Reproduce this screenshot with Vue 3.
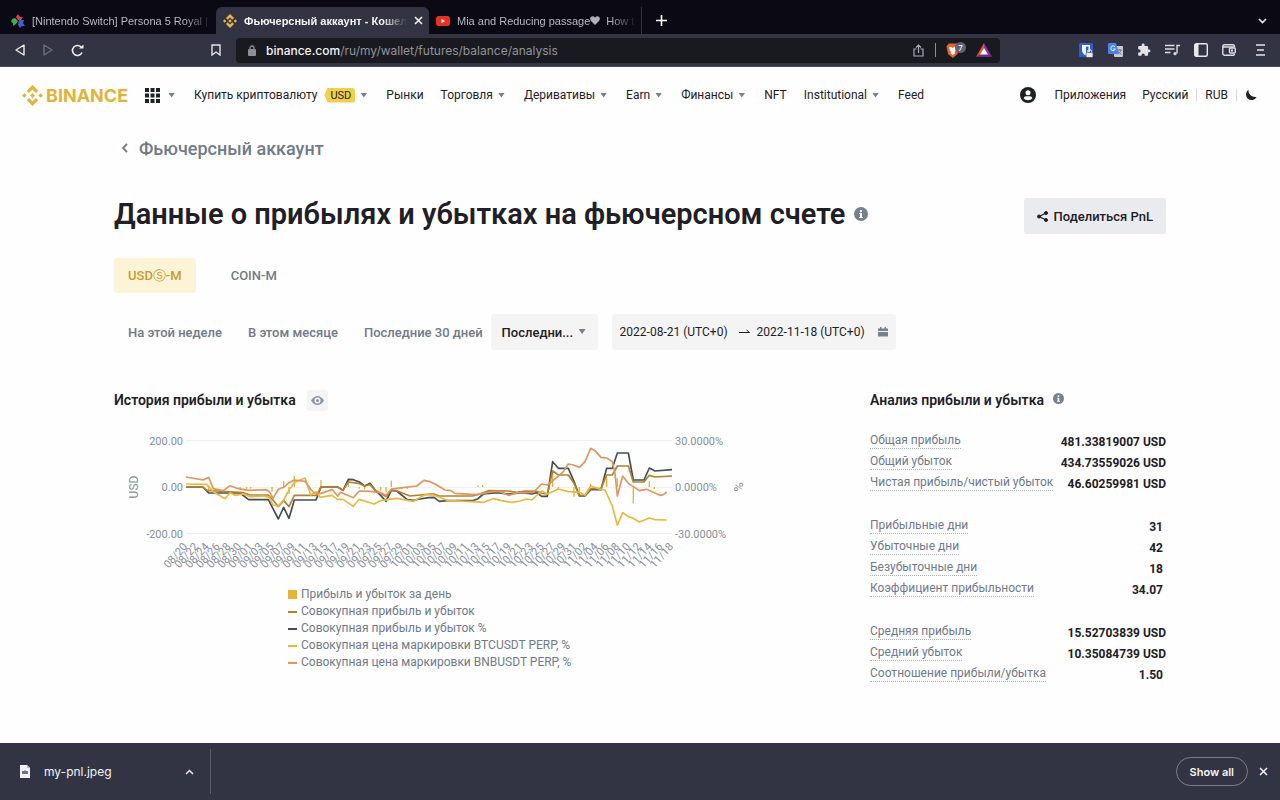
<script setup>
const navItems = [
  { label: 'Рынки' },
  { label: 'Торговля', menu: true },
  { label: 'Деривативы', menu: true },
  { label: 'Earn', menu: true },
  { label: 'Финансы', menu: true },
  { label: 'NFT' },
  { label: 'Institutional', menu: true },
  { label: 'Feed' },
]

const periods = ['На этой неделе', 'В этом месяце', 'Последние 30 дней']

const statGroups = [
  [
    { label: 'Общая прибыль', value: '481.33819007 USD' },
    { label: 'Общий убыток', value: '434.73559026 USD' },
    { label: 'Чистая прибыль/чистый убыток', value: '46.60259981 USD' },
  ],
  [
    { label: 'Прибыльные дни', value: '31', plain: true },
    { label: 'Убыточные дни', value: '42', plain: true },
    { label: 'Безубыточные дни', value: '18', plain: true },
    { label: 'Коэффициент прибыльности', value: '34.07', plain: true },
  ],
  [
    { label: 'Средняя прибыль', value: '15.52703839 USD' },
    { label: 'Средний убыток', value: '10.35084739 USD' },
    { label: 'Соотношение прибыли/убытка', value: '1.50', plain: true },
  ],
]

const legend = [
  { label: 'Прибыль и убыток за день', kind: 'bar' },
  { label: 'Совокупная прибыль и убыток', kind: 'total' },
  { label: 'Совокупная прибыль и убыток %', kind: 'percent' },
  { label: 'Совокупная цена маркировки BTCUSDT PERP, %', kind: 'btc' },
  { label: 'Совокупная цена маркировки BNBUSDT PERP, %', kind: 'bnb' },
]

// One label for every second day of the 90-day range.
const ticks = Array.from({ length: 46 }, (_, i) => {
  const d = new Date(Date.UTC(2022, 7, 20 + i * 2))
  const mm = String(d.getUTCMonth() + 1).padStart(2, '0')
  const dd = String(d.getUTCDate()).padStart(2, '0')
  return { x: 74 + i * 10.8, text: `${mm}/${dd}` }
})

// Series share a fine grid of three units per chart pixel.
const series = [
  { kind: 'percent', points: '258,321 308,321 326,339 420,339 446,359 505,359 535,417 551,382 567,415 583,360 648,360 663,321 713,321 729,331 745,298 760,299 778,306 794,318 810,310 826,331 842,346 858,364 874,331 890,333 922,359 940,361 960,357 985,353 1002,352 1018,364 1040,362 1118,362 1134,356 1150,342 1190,338 1225,342 1270,338 1295,342 1310,338 1325,349 1342,349 1358,245 1375,265 1405,265 1422,304 1438,348 1455,348 1472,329 1503,329 1520,265 1537,265 1552,219 1585,219 1600,300 1632,300 1648,264 1665,273 1716,269' },
  { kind: 'total', points: '258,321 308,321 322,331 350,333 430,338 450,345 505,345 519,360 535,380 551,362 567,380 583,346 650,346 663,321 713,321 729,331 745,306 775,310 794,318 810,314 826,331 842,340 858,350 874,330 890,332 930,348 990,342 1002,342 1018,348 1118,348 1140,342 1165,332 1225,333 1250,337 1275,333 1310,334 1325,340 1342,342 1358,273 1375,285 1405,285 1422,310 1438,346 1455,346 1472,326 1503,326 1520,285 1537,285 1552,258 1585,258 1600,306 1632,306 1648,286 1665,291 1716,288' },
  { kind: 'btc', points: '258,312 320,313 340,335 375,356 390,338 405,346 430,342 450,350 490,348 508,352 519,375 535,378 551,360 567,330 583,308 600,300 615,294 632,345 650,335 660,352 695,346 713,358 729,358 760,379 778,358 822,372 842,362 890,355 940,364 975,344 1000,345 1018,352 1045,362 1118,365 1150,367 1180,356 1205,362 1235,367 1260,363 1280,357 1295,360 1325,333 1342,342 1375,327 1405,335 1438,337 1455,345 1472,318 1503,328 1515,330 1537,378 1552,436 1568,398 1585,410 1600,415 1618,426 1648,414 1665,419 1700,420' },
  { kind: 'bnb', points: '258,291 310,300 326,292 340,326 370,332 390,317 415,326 445,331 500,329 510,338 519,355 535,328 551,322 567,308 583,300 615,304 632,328 642,338 660,341 697,329 713,348 722,337 760,353 778,333 810,334 842,338 858,346 874,327 890,325 950,318 972,301 990,305 1005,312 1035,330 1053,332 1065,340 1130,344 1180,334 1200,335 1225,346 1255,338 1300,337 1325,312 1342,315 1370,293 1390,275 1405,252 1420,255 1438,262 1455,245 1472,205 1485,212 1503,232 1520,234 1537,245 1545,280 1552,348 1568,288 1585,310 1600,320 1618,332 1640,328 1680,346 1690,344 1700,336' },
]

const bars = [
  [326, 336], [420, 326], [440, 326], [452, 326], [516, 335], [551, 303], [567, 342],
  [583, 288], [663, 300], [745, 299], [778, 326], [794, 328], [842, 332], [858, 337],
  [874, 302], [906, 327], [922, 327], [1134, 316], [1148, 315], [1358, 272], [1375, 327],
  [1422, 350], [1438, 343], [1472, 311], [1520, 292], [1552, 295], [1600, 370],
  [1648, 304], [1663, 327],
]
</script>

<template>
  <div class="window">
    <div class="tabs">
      <div class="tab first">
        <svg class="fav" viewBox="0 0 14 14" aria-hidden="true">
          <path d="M7 0l2 3 3 0-2 3H7L5 3z" fill="#d8404e" /><path d="M1 5l3-1 3 3-2 3-3 2 0-3-2-1z" fill="#3fae4d" />
          <path d="M8 6l5 0-1 3 2 3-3 0-2 2-2-3z" fill="#3c5fd6" />
        </svg>
        <span class="tab-title">[Nintendo Switch] Persona 5 Royal |</span>
      </div>
      <div class="tab active">
        <svg class="fav" viewBox="0 0 14 14" fill="#e9b449" aria-hidden="true">
          <path d="M7 0l4 4-1.700 1.700L7 3.400 4.700 5.700 3 4zM7 14l4-4-1.700-1.700L7 10.600 4.700 8.300 3 10zM0 7l1.700-1.700L3.400 7 1.700 8.700zM10.600 7l1.700-1.700L14 7l-1.700 1.700zM5.200 7L7 5.200 8.800 7 7 8.800z" />
        </svg>
        <span class="tab-title">Фьючерсный аккаунт - Кошел</span>
        <button class="close" aria-label="Закрыть вкладку">
          <svg width="9" height="9" viewBox="0 0 9 9" stroke="#f4f4f6" stroke-width="1.600"><path d="M1 1l7 7M8 1l-7 7" /></svg>
        </button>
      </div>
      <div class="tab last">
        <svg class="fav" viewBox="0 0 14 14" aria-hidden="true"><rect y="2" width="14" height="10" rx="2.500" fill="#e13427" /><path d="M5.500 5v4L9 7z" fill="#fff" /></svg>
        <span class="tab-title heart-title">Mia and Reducing passage<svg width="10" height="9" viewBox="0 0 10 9" fill="#b0b0b6" aria-hidden="true"><path d="M5 9L1 5Q-.5 3 .6 1.200 2.800-1 5 1.500 7.200-1 9.400 1.200 10.500 3 9 5z" /></svg> <span class="rest">How t</span></span>
      </div>
      <button class="plus" aria-label="Новая вкладка">
        <svg width="11" height="11" viewBox="0 0 11 11" stroke="#fff" stroke-width="1.600"><path d="M5.500 0v11M0 5.500h11" /></svg>
      </button>
      <button class="tabs-menu" aria-label="Поиск вкладок">
        <svg width="9" height="6" viewBox="0 0 9 6" fill="none" stroke="#e8e8ec" stroke-width="1.600"><path d="M1 1l3.500 3.500L8 1" /></svg>
      </button>
    </div>

    <div class="toolbar">
      <div class="tools-left">
        <button aria-label="Назад"><svg width="10" height="12" viewBox="0 0 10 12" fill="none" stroke="#eee" stroke-width="1.400" stroke-linejoin="round"><path d="M9 1v10L1 6z" /></svg></button>
        <button aria-label="Вперёд"><svg width="10" height="12" viewBox="0 0 10 12" fill="none" stroke="#6c6e7b" stroke-width="1.400" stroke-linejoin="round"><path d="M1 1v10l8-5z" /></svg></button>
        <button aria-label="Обновить"><svg width="13" height="13" viewBox="0 0 13 13" fill="none" stroke="#eee" stroke-width="1.600"><path d="M11 8.500A5 5 0 1 1 10.500 3.500" /><path d="M8 4.500h4.500V.5z" fill="#eee" stroke="none" /></svg></button>
        <button class="bookmark" aria-label="Закладка"><svg width="10" height="12" viewBox="0 0 10 12" fill="none" stroke="#e4e4e8" stroke-width="1.400"><path d="M1 1h8v10L5 8l-4 3z" /></svg></button>
      </div>
      <div class="address">
        <svg width="8" height="11" viewBox="0 0 8 11" aria-hidden="true"><rect y="4" width="8" height="7" rx="1" fill="#8e8f98" /><path d="M2 4.500V3a2 2 0 0 1 4 0v1.500" fill="none" stroke="#8e8f98" stroke-width="1.300" /></svg>
        <a class="url" href="#"><b>binance.com</b>/ru/my/wallet/futures/balance/analysis</a>
        <svg width="11" height="13" viewBox="0 0 11 13" fill="none" stroke="#a9aab2" stroke-width="1.200" aria-hidden="true"><path d="M3.500 5H1v7h9V5H7.500M5.500 9V1M3 3.500L5.500 1 8 3.500" /></svg>
        <i class="rule"></i>
        <svg class="shield" width="21" height="17" viewBox="0 0 21 17" aria-hidden="true">
          <path d="M2.500 1.500h8.500l2 3-1.500 7.500-4.700 4L2 12 .5 4.500z" fill="#e8602c" />
          <path d="M3 5l2.500 0 1.300 1 1.200-1H10.500L9.500 8.500l-1 1.500.5 1.500-2.200 1.500L4.500 11.500l.5-1.500-1-1.500z" fill="#fff" />
          <circle cx="14.500" cy="5.500" r="5.500" fill="#60636f" />
          <text x="14.500" y="8.500" text-anchor="middle" class="shield-count">7</text>
        </svg>
        <svg width="16" height="14" viewBox="0 0 16 14" aria-hidden="true"><path d="M8 0L0 14l8-4.500z" fill="#f0502a" /><path d="M8 0l8 14-8-4.500z" fill="#8f2fa6" /><path d="M0 14h16L8 9z" fill="#6a2b8c" /><path d="M8 5l4 6.500H4z" fill="#fff" /></svg>
      </div>
      <div class="tools-right">
        <button aria-label="Менеджер паролей"><svg width="15" height="15" viewBox="0 0 15 15"><rect width="14" height="14" rx="1.500" fill="#2f5fd0" /><path d="M3 2h8v5c0 3-2 4.500-4 5.500C5 11.500 3 10 3 7z" fill="#fff" /><path d="M7 3.500h2.500V7c0 2-1 3-2.500 4z" fill="#2f5fd0" /><rect x="7" y="9.500" width="7" height="5" rx="1" fill="#e9e9e9" stroke="#444" stroke-width=".7" /><path d="M8.500 9.500v-1a2 2 0 0 1 4 0v1" fill="none" stroke="#ddd" /></svg></button>
        <button aria-label="Переводчик"><svg width="15" height="15" viewBox="0 0 15 15"><rect x="6" y="3" width="9" height="11" rx="1" fill="#c8cbd2" /><path d="M9 7h5M11.500 6v1M13 7c-.5 2-2 3.500-3.500 4M10 8.500l3.500 3" stroke="#727680" fill="none" /><path d="M1 0h7l3 11H1a1 1 0 0 1-1-1V1a1 1 0 0 1 1-1z" fill="#4c82e8" /><path d="M7 4A2.300 2.300 0 1 0 7.300 6H5.300" stroke="#fff" fill="none" /></svg></button>
        <button aria-label="Расширения"><svg width="14" height="14" viewBox="0 0 24 24" fill="#e4e4e8"><path d="M20.500 11H19V7a2 2 0 0 0-2-2h-4V3.500a2.500 2.500 0 0 0-5 0V5H4a2 2 0 0 0-2 2v3.800h1.500a2.700 2.700 0 0 1 0 5.400H2V20c0 1.100.9 2 2 2h3.800v-1.500a2.700 2.700 0 0 1 5.400 0V22H17a2 2 0 0 0 2-2v-4h1.500a2.500 2.500 0 0 0 0-5z" /></svg></button>
        <button aria-label="Медиа"><svg width="15" height="12" viewBox="0 0 15 12" fill="none" stroke="#dcdce2" stroke-width="1.400"><path d="M0 1.500h9.500M0 5h9.500M0 8.500h5.500M12 9.500V1.500H15" /><circle cx="10" cy="9.700" r="1.600" fill="#dcdce2" stroke="none" /></svg></button>
        <button aria-label="Боковая панель"><svg width="14" height="14" viewBox="0 0 14 14"><rect x=".7" y=".7" width="12.600" height="12.600" rx="1.500" fill="none" stroke="#e8e8ec" stroke-width="1.400" /><path d="M1 1h3.500v12H1z" fill="#e8e8ec" /></svg></button>
        <button aria-label="Кошелёк"><svg width="14" height="12" viewBox="0 0 14 12" fill="none" stroke="#dcdce2" stroke-width="1.400"><path d="M12.500 3.500V2.200Q12.500.8 11 .8H2.500Q.8.8.8 2.500v7Q.8 11.200 2.500 11.200H11q1.500 0 1.500-1.500M.8 3h11" /><rect x="7.500" y="4" width="5.800" height="5" rx="1" /><circle cx="10" cy="6.500" r=".5" /></svg></button>
        <button class="main-menu" aria-label="Меню"><svg width="9" height="12" viewBox="0 0 9 12" stroke="#e4e4e8" stroke-width="1.300"><path d="M0 1h9M1 6h7M0 11h9" /></svg></button>
      </div>
    </div>

    <div class="page">
      <header class="header">
        <a class="logo" href="#" aria-label="BINANCE">
          <svg width="21" height="21" viewBox="0 0 21 21" fill="#e2b33b" aria-hidden="true">
            <path d="M10.500 0l5.800 5.800-2.300 2.300-3.500-3.500L7 8.100 4.700 5.800zM10.500 21l5.800-5.800-2.300-2.300-3.500 3.500L7 12.900l-2.300 2.300zM0 10.500l2.300-2.300 2.300 2.300-2.300 2.300zM16.400 10.500l2.300-2.300 2.300 2.300-2.300 2.300zM8 10.500L10.500 8l2.500 2.500-2.500 2.500z" />
          </svg>
          <span>BINANCE</span>
        </a>
        <button class="apps" aria-label="Продукты">
          <svg width="15" height="15" viewBox="0 0 15 15" fill="#1e2026"><path d="M0 0h4v4H0zM5.500 0h4v4h-4zM11 0h4v4h-4zM0 5.500h4v4H0zM5.500 5.500h4v4h-4zM11 5.500h4v4h-4zM0 11h4v4H0zM5.500 11h4v4h-4zM11 11h4v4h-4z" /></svg>
          <i class="caret"></i>
        </button>
        <nav class="nav">
          <button class="buy">Купить криптовалюту <span class="badge">USD</span><i class="caret"></i></button>
          <template v-for="item in navItems" :key="item.label">
            <button v-if="item.menu" class="menu">{{ item.label }}<i class="caret"></i></button>
            <a v-else href="#">{{ item.label }}</a>
          </template>
        </nav>
        <div class="account">
          <button aria-label="Профиль" class="user"><svg width="16" height="16" viewBox="0 0 16 16"><circle cx="8" cy="8" r="8" fill="#1e2026" /><circle cx="8" cy="5.700" r="2.500" fill="#fff" /><path d="M3.500 11.300Q4.500 9.300 6 9.300h4q1.500 0 2.500 2-1.800 2-4.500 2t-4.500-2z" fill="#fff" /></svg></button>
          <a href="#">Приложения</a>
          <a href="#">Русский</a>
          <i class="sep"></i>
          <a href="#">RUB</a>
          <i class="sep"></i>
          <button aria-label="Тёмная тема"><svg width="12" height="12" viewBox="0 0 12 12" fill="#1e2026"><path d="M3.500.8A5.600 5.600 0 1 0 11.600 8Q8 8.600 5.500 6.300T3.500.8z" /></svg></button>
        </div>
      </header>

      <main class="content">
        <a class="back" href="#">
          <svg width="7" height="10" viewBox="0 0 7 10" fill="none" stroke="#707a8a" stroke-width="1.800"><path d="M6 1L2 5l4 4" /></svg>
          Фьючерсный аккаунт
        </a>
        <div class="title-row">
          <h1>Данные о прибылях и убытках на фьючерсном счете
            <svg width="14" height="14" viewBox="0 0 14 14" aria-hidden="true"><circle cx="7" cy="7" r="7" fill="#76808f" /><path d="M6 3h2v2H6zM5 6h3v4h1v1H5v-1h1V7H5z" fill="#fff" /></svg>
          </h1>
          <button class="share">
            <svg width="11" height="11" viewBox="0 0 11 11" fill="#1e2026" stroke="#1e2026" aria-hidden="true"><path d="M9 2L2 5.500 9 9" fill="none" stroke-width="1.300" /><circle cx="9" cy="2" r="1.500" /><circle cx="2" cy="5.500" r="1.500" /><circle cx="9" cy="9" r="1.500" /></svg>
            Поделиться PnL
          </button>
        </div>
        <div class="markets">
          <button class="chosen">USDⓈ-M</button>
          <button>COIN-M</button>
        </div>
        <div class="filters">
          <button v-for="p in periods" :key="p">{{ p }}</button>
          <div class="select-box">
            <select aria-label="Период"><option>Последни...</option></select>
            <i class="caret"></i>
          </div>
          <div class="dates">
            <input aria-label="Начало" value="2022-08-21 (UTC+0)" />
            <svg width="11" height="6" viewBox="0 0 11 6" fill="none" stroke="#1e2026" aria-hidden="true"><path d="M0 3.500h10.500L7.500 1" /></svg>
            <input aria-label="Конец" value="2022-11-18 (UTC+0)" />
            <svg class="cal" width="10" height="10" viewBox="0 0 10 10" fill="#76808f" aria-hidden="true"><path d="M0 1.500h2V0h1.500v1.500h3V0H8v1.500h2V4H0zM0 5h10v4.500H0z" /></svg>
          </div>
        </div>

        <div class="columns">
          <section class="history">
            <h2>История прибыли и убытка
              <button class="eye" aria-label="Скрыть"><svg width="13" height="9" viewBox="0 0 13 9"><path d="M0 4.500Q3 0 6.500 0T13 4.500Q10 9 6.500 9T0 4.500z" fill="#8d96a3" /><circle cx="6.500" cy="4.500" r="3" fill="#f4f4f5" /><circle cx="6.500" cy="4.500" r="1.500" fill="#8d96a3" /></svg></button>
            </h2>
            <svg class="chart" width="640" height="150" viewBox="0 0 640 150" role="img" aria-label="История прибыли и убытка">
              <g class="grid"><path d="M72 17.500H558M72 64.500H558M72 110.500H558" /></g>
              <g class="axis" text-anchor="end">
                <text x="69" y="22">200.00</text><text x="69" y="68">0.00</text><text x="69" y="115">-200.00</text>
              </g>
              <g class="axis">
                <text x="561" y="22">30.0000%</text><text x="561" y="68">0.0000%</text><text x="561" y="115">-30.0000%</text>
              </g>
              <text class="unit" transform="translate(24 64) rotate(-90)" text-anchor="middle">USD</text>
              <text class="unit percent-unit" transform="translate(629 64) rotate(-90)" text-anchor="middle">%</text>
              <text v-for="t in ticks" :key="t.text" class="tick" text-anchor="end" :transform="`translate(${t.x} 124) rotate(-48)`">{{ t.text }}</text>
              <g transform="translate(-14 -43) scale(.33333)">
                <path v-for="b in bars" :key="b[0]" class="day" :d="`M${b[0]} 321V${b[1]}`" />
                <polyline v-for="s in series" :key="s.kind" :class="['line', s.kind]" :points="s.points" />
              </g>
            </svg>
            <ul class="legend">
              <li v-for="l in legend" :key="l.kind"><i :class="['mark', l.kind]"></i>{{ l.label }}</li>
            </ul>
          </section>

          <section class="analysis">
            <h2>Анализ прибыли и убытка
              <svg width="11" height="11" viewBox="0 0 14 14" aria-hidden="true"><circle cx="7" cy="7" r="7" fill="#76808f" /><path d="M6 3h2v2H6zM5 6h3v4h1v1H5v-1h1V7H5z" fill="#fff" /></svg>
            </h2>
            <dl v-for="(g, i) in statGroups" :key="i">
              <div v-for="s in g" :key="s.label">
                <dt><span>{{ s.label }}</span></dt>
                <dd :class="{ plain: s.plain }">{{ s.value }}</dd>
              </div>
            </dl>
          </section>
        </div>
      </main>
    </div>

    <footer class="downloads">
      <button class="file">
        <svg width="10" height="13" viewBox="0 0 10 13" aria-hidden="true"><path d="M0 0h7l3 3v10H0z" fill="#eef0f4" /><path d="M7 0v3h3z" fill="#b8bcc8" /><path d="M2 9V6h2l1-1 1 1h2v3z" fill="#6a7488" /></svg>
        <span>my-pnl.jpeg</span>
        <svg width="9" height="6" viewBox="0 0 9 6" fill="none" stroke="#e8e8ec" stroke-width="1.500" aria-hidden="true"><path d="M1 5l3.500-3.500L8 5" /></svg>
      </button>
      <button class="show-all">Show all</button>
      <button class="close" aria-label="Закрыть">
        <svg width="9" height="9" viewBox="0 0 9 9" stroke="#f4f4f6" stroke-width="1.500"><path d="M1 1l7 7M8 1l-7 7" /></svg>
      </button>
    </footer>
  </div>
</template>

<style>
body { background: #fefefe; }
</style>

<style scoped>
.window {
  min-height: 100vh;
  display: flex;
  flex-direction: column;
  font-family: Roboto, "Noto Sans", sans-serif;
  font-size: 12px;
  color: #1e2026;
}
button, input, select { font: inherit; color: inherit; background: none; border: 0; margin: 0; padding: 0; }
button { display: inline-flex; align-items: center; cursor: pointer; white-space: nowrap; }
a { color: inherit; text-decoration: none; white-space: nowrap; }
svg { flex: none; display: block; }

.tabs {
  display: flex;
  align-items: flex-end;
  height: 34px;
  background: #0b0a14;
  font-family: "Liberation Sans", "Noto Sans", sans-serif;
  font-size: 11px;
}
.tab { display: flex; align-items: center; height: 27px; gap: 7px; color: #b8b8c0; box-sizing: border-box; }
.fav { width: 14px; height: 14px; }
.tab-title {
  flex: 1;
  white-space: nowrap;
  mask-image: linear-gradient(90deg, #000 85%, transparent);
}
.heart-title { display: flex; align-items: center; }
.rest { margin-left: 6px; }
.first { width: 216px; padding: 0 4px 0 11px; }
.active { width: 213px; padding: 0 6px 0 7px; background: #323443; border-radius: 6px 6px 0 0; color: #f4f4f6; font-weight: 700; }
.last { width: 213px; padding: 0 4px 0 7px; border-right: 1px solid #33343f; }
.plus { height: 27px; padding: 0 14px; }
.tabs-menu { height: 27px; margin-left: auto; padding-right: 13px; }

.toolbar { display: flex; align-items: center; height: 32px; background: #323443; border-bottom: 1px solid #44465a; padding-right: 15px; }
.tools-left { display: flex; align-items: center; width: 221px; padding-left: 15px; gap: 18px; }
.bookmark { margin: 0 15px 0 auto; }
.address {
  flex: 1;
  display: flex;
  align-items: center;
  height: 25px;
  box-sizing: border-box;
  padding: 0 8px 0 12px;
  background: #191a20;
  border-radius: 4px;
  font-family: Inter, "Noto Sans", sans-serif;
  color: #92939b;
}
.url { flex: 1; margin-left: 10px; }
.url b { font-weight: 500; color: #f4f4f6; }
.rule { width: 1px; height: 14px; margin: 0 10px 0 11px; background: #8a8b93; }
.shield { margin-right: 9px; }
.shield-count { font-size: 8px; fill: #fff; }
.tools-right { display: flex; align-items: center; gap: 14px; margin-left: 79px; }
.main-menu { margin-left: 6px; }

.page { flex: 1; background: #fefefe; }
.header { display: flex; align-items: center; height: 56px; padding: 0 23px 0 22px; }
.logo { display: flex; align-items: center; gap: 3px; color: #e2b33b; font: 700 18px Inter, "Noto Sans", sans-serif; }
.apps { margin-left: 17px; gap: 8px; }
.caret { width: 7px; height: 5px; background: #76808f; clip-path: polygon(0 0, 100% 0, 50% 100%); }
.nav { display: flex; align-items: center; gap: 17px; margin-left: 19px; }
.nav button { gap: 5px; }
.nav .menu, .nav .buy { margin-right: 2px; }
.badge { margin-left: 2px; padding: 0 4px 0 6px; border-radius: 3px; background: #f0cf4a; font-size: 11px; line-height: 15px; clip-path: polygon(3px 0, 100% 0, 100% 100%, 3px 100%, 0 50%); }
.account { display: flex; align-items: center; gap: 8px; margin-left: auto; }
.user { margin-right: 10px; }
.account a + a { margin-left: 8px; }
.sep { width: 1px; height: 12px; background: #d5d8dd; }

.content { padding: 0 114px 24px; }
.back { display: inline-flex; align-items: center; gap: 11px; height: 24px; margin: 13px 0 0 7px; font-size: 18px; font-weight: 500; color: #707a8a; }
.title-row { display: flex; align-items: flex-start; justify-content: space-between; height: 36px; margin-top: 38px; }
h1 { display: flex; align-items: center; gap: 9px; margin: 0; font-size: 29px; line-height: 32px; font-weight: 600; white-space: nowrap; }
.share { height: 36px; padding: 0 13px; gap: 6px; border-radius: 3px; background: #eaebee; font-size: 13px; font-weight: 500; }
.markets { display: flex; height: 35px; margin-top: 24px; gap: 21px; font-size: 13px; }
.markets button { padding: 0 14px; border-radius: 3px; font-weight: 500; color: #707a8a; }
.markets .chosen { background: #fdf4d8; color: #c99a2b; }
.filters { display: flex; align-items: center; height: 36px; margin-top: 21px; padding-left: 14px; font-size: 13px; }
.filters button { margin-right: 26px; font-weight: 500; color: #707a8a; }
.select-box { position: relative; width: 107px; height: 36px; margin-left: -18px; border-radius: 3px; background: #f4f4f5; }
.select-box select { width: 100%; height: 100%; padding: 0 24px 0 11px; appearance: none; font-weight: 500; }
.select-box .caret { position: absolute; right: 12px; top: 15px; }
.dates { display: flex; align-items: center; height: 36px; margin-left: 14px; padding: 0 8px; border-radius: 3px; background: #f4f4f5; font-size: 12px; }
.dates input { width: 119px; }
.dates svg { margin-right: 7px; }
.dates .cal { margin: 0 0 0 2px; }

.columns { display: flex; justify-content: space-between; margin-top: 38px; }
h2 { display: flex; align-items: center; height: 24px; margin: 0; font-size: 14px; font-weight: 600; white-space: nowrap; }
.eye { width: 21px; height: 21px; margin-left: 11px; justify-content: center; background: #f4f4f5; border-radius: 3px; }
.history { width: 640px; }
.chart { margin-top: 11px; }
.grid path { stroke: #f1f1f3; }
.axis, .unit, .tick { fill: #858e9b; font-size: 11px; }
.unit { font-size: 12px; }
.percent-unit { font-size: 13px; }
.line { fill: none; stroke-width: 5; stroke-linejoin: round; }
.percent { --tone: #474d55; }
.total { --tone: #ae8330; }
.btc { --tone: #e6ba40; }
.bnb { --tone: #df965f; }
.line { stroke: var(--tone); }
.day { stroke: #e3b437; stroke-width: 4; }
.legend { margin: 13px 0 0; padding: 0 0 0 174px; list-style: none; color: #707a8a; line-height: 17px; }
.legend li { display: flex; align-items: center; gap: 4px; }
.mark { width: 9px; height: 2px; background: var(--tone); }
.mark.bar { height: 9px; background: #e3b437; }

.analysis { width: 296px; }
.analysis h2 { margin-bottom: 21px; }
.analysis h2 svg { margin: 0 0 3px 9px; }
dl { margin: 0 0 22px; }
dl div { display: flex; justify-content: space-between; height: 21px; }
dt { color: #707a8a; line-height: 15px; white-space: nowrap; }
dt span { display: block; border-bottom: 1px dotted #a9b0ba; }
dd { margin: 0; font-size: 12px; font-weight: 700; line-height: 18px; white-space: nowrap; }
dd.plain { padding-right: 3px; }

.downloads { display: flex; align-items: center; height: 57px; padding-right: 12px; background: #323443; color: #f4f4f6; font-family: Inter, "Noto Sans", sans-serif; }
.file { width: 211px; height: 45px; box-sizing: border-box; padding: 0 16px 0 20px; border-right: 1px solid #5b5d6b; }
.file span { flex: 1; margin-left: 14px; text-align: left; }
.show-all { height: 29px; margin: 0 11px 0 auto; padding: 0 13px; border: 1px solid #7b7d8a; border-radius: 15px; font-size: 11px; font-weight: 600; }
</style>
